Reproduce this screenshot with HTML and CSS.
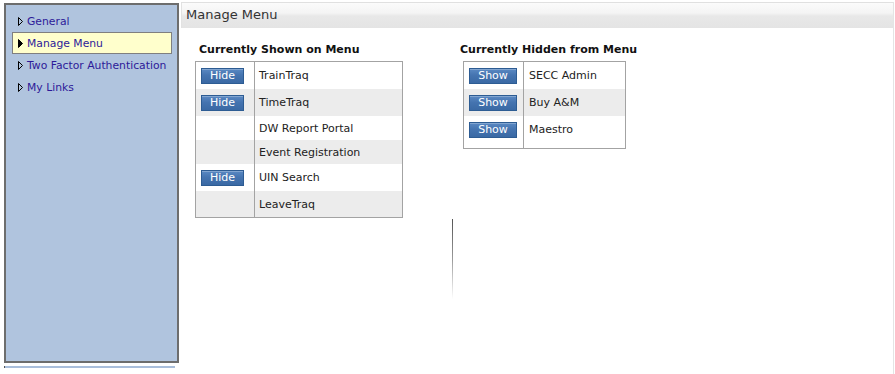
FILE: index.html
```html
<!DOCTYPE html>
<html lang="en">
<head>
<meta charset="utf-8">
<title>Manage Menu</title>
<link rel="stylesheet" href="styles.css">
</head>
<body>
<div class="page">
  <aside class="side">
    <nav class="nav">
      <a class="nav-item" href="#"><svg class="tri" viewBox="0 0 5 9"><polygon points="0.5,0.5 4.5,4.5 0.5,8.5"/></svg>General</a>
      <a class="nav-item active" href="#"><svg class="tri" viewBox="0 0 5 9"><polygon points="0.5,0.5 4.5,4.5 0.5,8.5"/></svg>Manage Menu</a>
      <a class="nav-item" href="#"><svg class="tri" viewBox="0 0 5 9"><polygon points="0.5,0.5 4.5,4.5 0.5,8.5"/></svg>Two Factor Authentication</a>
      <a class="nav-item" href="#"><svg class="tri" viewBox="0 0 5 9"><polygon points="0.5,0.5 4.5,4.5 0.5,8.5"/></svg>My Links</a>
    </nav>
    <div class="side-foot"></div>
  </aside>
  <main class="main">
    <header class="title-bar">Manage Menu</header>
    <div class="cols">
      <section class="col col-shown">
        <h2 class="col-title">Currently Shown on Menu</h2>
        <table class="menu-table">
          <tr class="row-btn"><td class="act"><button class="btn">Hide</button></td><td class="name">TrainTraq</td></tr>
          <tr class="row-btn alt"><td class="act"><button class="btn">Hide</button></td><td class="name">TimeTraq</td></tr>
          <tr class="row-plain"><td class="act"></td><td class="name">DW Report Portal</td></tr>
          <tr class="row-plain alt"><td class="act"></td><td class="name">Event Registration</td></tr>
          <tr class="row-btn"><td class="act"><button class="btn">Hide</button></td><td class="name">UIN Search</td></tr>
          <tr class="row-last alt"><td class="act"></td><td class="name">LeaveTraq</td></tr>
        </table>
      </section>
      <section class="col col-hidden">
        <h2 class="col-title">Currently Hidden from Menu</h2>
        <table class="menu-table">
          <tr class="row-btn"><td class="act"><button class="btn btn-show">Show</button></td><td class="name">SECC Admin</td></tr>
          <tr class="row-btn alt"><td class="act"><button class="btn btn-show">Show</button></td><td class="name">Buy A&amp;M</td></tr>
          <tr class="row-mid"><td class="act"><button class="btn btn-show">Show</button></td><td class="name">Maestro</td></tr>
          <tr class="row-spacer"><td class="act"></td><td class="name"></td></tr>
        </table>
      </section>
    </div>
    <div class="divider-line"></div>
  </main>
</div>
</body>
</html>
```

FILE: styles.css
```css
html, body {
  margin: 0;
  padding: 0;
  background: #ffffff;
}

body {
  font-family: "DejaVu Sans", Verdana, sans-serif;
  color: #222;
}

.page {
  display: flex;
  padding-top: 2px;
  height: 372px;
  overflow: hidden;
}

/* Sidebar */
.side {
  flex: none;
  width: 175px;
  margin-left: 4px;
  padding-top: 1px;
}

.nav {
  box-sizing: border-box;
  height: 360px;
  background: #b0c4de;
  border: 2px solid #6d6d6d;
  padding: 5px 5px 0 6px;
}

.nav-item {
  display: flex;
  align-items: center;
  box-sizing: border-box;
  height: 22px;
  border: 1px solid transparent;
  padding-left: 5px;
  font-size: 10.8px;
  color: #2d1a99;
  text-decoration: none;
  white-space: nowrap;
}

.nav-item.active {
  background: #ffffcc;
  border-color: #7f7f7f;
}

.tri {
  flex: none;
  width: 5px;
  height: 9px;
  margin-right: 4px;
}

.tri polygon {
  fill: none;
  stroke: #000;
  stroke-width: 1;
}

.nav-item.active .tri polygon {
  fill: #000;
}

.side-foot {
  margin-top: 3px;
  width: 170px;
  height: 2px;
  background: #a9bedb;
  border-left: 1px solid #555;
}

/* Main */
.main {
  flex: 1;
  position: relative;
  margin-left: 2px;
  margin-right: 1px;
  border-top: 1px solid #e0e0e0;
  border-right: 1px solid #e4e4e4;
}

.title-bar {
  box-sizing: border-box;
  height: 25px;
  border-left: 1px solid #e2e2e2;
  padding-left: 4px;
  font-size: 13px;
  line-height: 23px;
  color: #333;
  background: linear-gradient(#fbfbfb 0%, #f4f4f4 40%, #e8e8e8 52%, #e4e4e4 100%);
}

.cols {
  display: flex;
  padding-top: 15px;
}

.col-title {
  margin: 0 0 5px 0;
  font-size: 11px;
  line-height: 13px;
  font-weight: bold;
  color: #111;
  white-space: nowrap;
}

.col-shown {
  margin-left: 14px;
}

.col-shown .col-title {
  padding-left: 4px;
}

.col-shown .menu-table {
  width: 208px;
}

.col-shown .act {
  width: 53px;
}

.col-hidden {
  margin-left: 57px;
}

.col-hidden .menu-table {
  width: 163px;
  margin-left: 3px;
}

.col-hidden .act {
  width: 54px;
}

.menu-table {
  border-collapse: separate;
  border-spacing: 0;
  border: 1px solid #a3a3a3;
  font-size: 11px;
  line-height: 14px;
}

.menu-table td {
  padding: 0;
  vertical-align: middle;
}

.menu-table .act {
  padding-left: 5px;
  border-right: 1px solid #a3a3a3;
}

.menu-table .name {
  padding-left: 4px;
  padding-top: 1px;
  color: #222;
  white-space: nowrap;
}

.col-hidden .name {
  padding-left: 5px;
}

.menu-table tr.alt td {
  background: #ececec;
}

.row-btn { height: 27px; }
.row-plain { height: 24px; }
.row-last { height: 26px; }
.row-mid { height: 27px; }
.row-spacer { height: 5px; }

.btn {
  display: block;
  box-sizing: border-box;
  width: 43px;
  height: 16px;
  padding: 0;
  border: 1px solid #2d5c93;
  background: linear-gradient(#5b89c3 0%, #4574b0 45%, #3a69a4 100%);
  box-shadow: inset 0 1px 0 rgba(255, 255, 255, 0.25);
  color: #fff;
  font-family: "DejaVu Sans", Verdana, sans-serif;
  font-size: 11px;
  line-height: 14px;
  text-align: center;
}

.btn-show {
  width: 48px;
}

.divider-line {
  position: absolute;
  left: 271px;
  top: 216px;
  width: 1px;
  height: 80px;
  background: linear-gradient(#555 0%, #9a9a9a 50%, rgba(255, 255, 255, 0) 100%);
}
```
